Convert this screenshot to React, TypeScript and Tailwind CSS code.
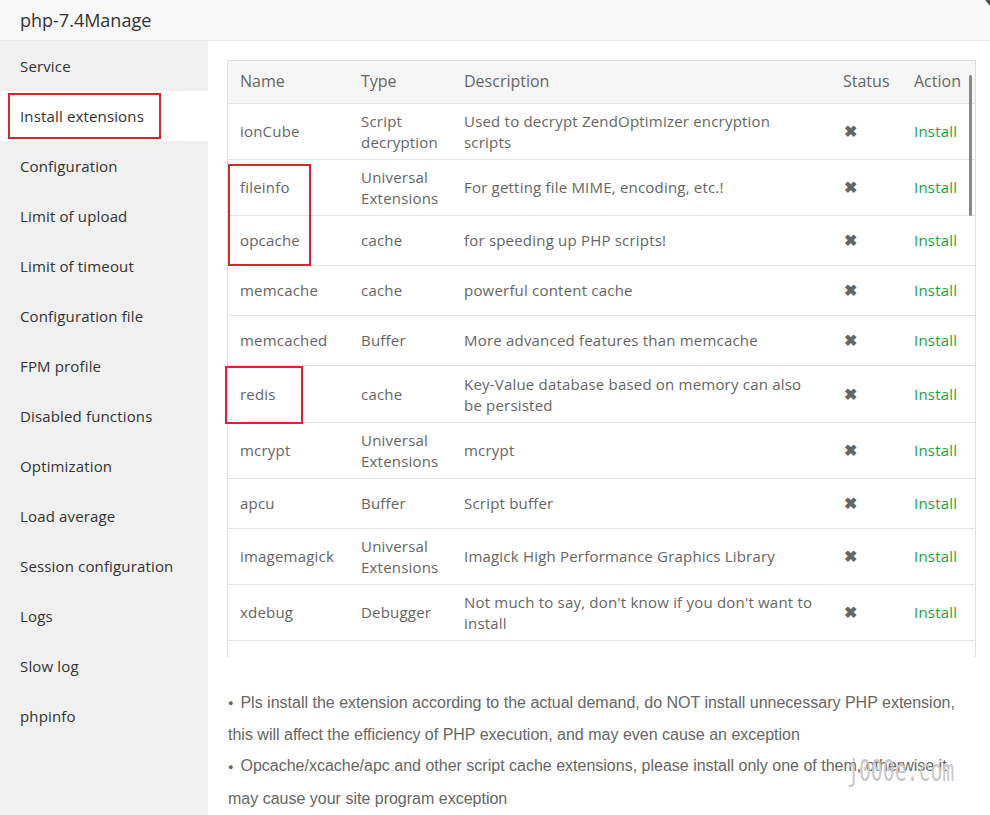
import React from "react";

type Row = { name: string; type: React.ReactNode; desc: React.ReactNode; tall?: boolean };

const rows: Row[] = [
  { name: "ionCube", type: <>Script<br />decryption</>, desc: <>Used to decrypt ZendOptimizer encryption<br />scripts</> },
  { name: "fileinfo", type: <>Universal<br />Extensions</>, desc: "For getting file MIME, encoding, etc.!" },
  { name: "opcache", type: "cache", desc: "for speeding up PHP scripts!" },
  { name: "memcache", type: "cache", desc: "powerful content cache" },
  { name: "memcached", type: "Buffer", desc: "More advanced features than memcache" },
  { name: "redis", type: "cache", desc: <>Key-Value database based on memory can also<br />be persisted</>, tall: true },
  { name: "mcrypt", type: <>Universal<br />Extensions</>, desc: "mcrypt" },
  { name: "apcu", type: "Buffer", desc: "Script buffer" },
  { name: "imagemagick", type: <>Universal<br />Extensions</>, desc: "Imagick High Performance Graphics Library" },
  { name: "xdebug", type: "Debugger", desc: <>Not much to say, don't know if you don't want to<br />install</> },
  { name: "imap", type: "Mail", desc: "Mail service extension" },
  { name: "exif", type: "Universal", desc: "Used to read picture EXIF information" },
];

const menu = [
  "Service",
  "Install extensions",
  "Configuration",
  "Limit of upload",
  "Limit of timeout",
  "Configuration file",
  "FPM profile",
  "Disabled functions",
  "Optimization",
  "Load average",
  "Session configuration",
  "Logs",
  "Slow log",
  "phpinfo",
];

export default function App() {
  return (
    <div
      className="relative w-[990px] h-[815px] overflow-hidden bg-white text-[#666]"
      style={{ fontFamily: '"Open Sans", "Noto Sans", sans-serif' }}
    >
      <div className="h-[41px] bg-[#f8f8f8] border-b border-[#e6e6e6] flex items-center pl-5 text-[18px] text-[#333]">
        php-7.4Manage
      </div>
      <div className="flex h-[774px]">
        <div className="w-[208px] bg-[#f0f0f0] shrink-0">
          {menu.map((m, i) => (
            <div
              key={m}
              className={
                "h-[50px] flex items-center pl-5 text-[15px] tracking-[0.15px] text-[#333] " +
                (i === 1 ? "bg-white" : "")
              }
            >
              {m}
            </div>
          ))}
        </div>
        <div className="flex-1 pl-[19px] pr-[14px] pt-[19px]">
          <div className="relative h-[597px] overflow-hidden border-l border-r border-t border-[#dddddd]">
            <table className="w-full border-collapse text-[15px] leading-[21px] tracking-[0.2px]">
              <colgroup>
                <col className="w-[121px]" />
                <col className="w-[103px]" />
                <col className="w-[379px]" />
                <col className="w-[71px]" />
                <col />
              </colgroup>
              <thead>
                <tr className="h-[42px] bg-[#f6f6f6] border-b border-[#e2e2e2]">
                  <th className="text-left font-normal pl-[12px] text-[16px] tracking-normal">Name</th>
                  <th className="text-left font-normal pl-[12px] text-[16px] tracking-normal">Type</th>
                  <th className="text-left font-normal pl-[12px] text-[16px] tracking-normal">Description</th>
                  <th className="text-left font-normal pl-[12px] text-[16px] tracking-normal">Status</th>
                  <th className="text-left font-normal pl-[12px] text-[16px] tracking-normal">Action</th>
                </tr>
              </thead>
              <tbody>
                {rows.map((r) => {
                  const pad = r.tall ? "pt-[8px] pb-[6px]" : "pt-[7px] pb-[6px]";
                  return (
                    <tr key={r.name} className="h-[50px] border-b border-[#e2e2e2]">
                      <td className={"pl-[12px] whitespace-nowrap " + pad}>{r.name}</td>
                      <td className={"pl-[12px] whitespace-nowrap " + pad}>{r.type}</td>
                      <td className={"pl-[12px] whitespace-nowrap " + pad}>{r.desc}</td>
                      <td className={"pl-[13px] " + pad}>
                        <span className="text-[16px] text-[#666] font-bold">✖</span>
                      </td>
                      <td className={"pl-[12px] text-[#20a53a] " + pad}>Install</td>
                    </tr>
                  );
                })}
              </tbody>
            </table>
            <div className="absolute right-[3px] top-[14px] w-[3px] h-[141px] bg-[#888] rounded-sm" />
          </div>
          <div
            className="mt-[30px] pl-[1px] text-[16px] leading-[31px] text-[#666] whitespace-nowrap"
            style={{ fontFamily: '"Liberation Sans", Arial, sans-serif' }}
          >
            <p>
              <span className="text-[9px] align-middle mr-[7px]">●</span>Pls install the extension according to the actual demand, do NOT install unnecessary PHP extension,
              <br />
              this will affect the efficiency of PHP execution, and may even cause an exception
            </p>
            <p>
              <span className="text-[9px] align-middle mr-[7px]">●</span>Opcache/xcache/apc and other script cache extensions, please install only one of them, otherwise it
              <br />
              may cause your site program exception
            </p>
          </div>
        </div>
      </div>

      {/* annotations */}
      <div className="absolute left-[8px] top-[93px] w-[153px] h-[46px] border-2 border-[#d7262e]" />
      <div className="absolute left-[228px] top-[164px] w-[83px] h-[102px] border-2 border-[#d7262e]" />
      <div className="absolute left-[225px] top-[366px] w-[78px] h-[58px] border-2 border-[#d7262e]" />

      <div
        className="absolute left-[847px] top-[751px] text-[30px] leading-[40px] text-[#c8c8c8] origin-left scale-x-[0.66]"
        style={{ fontFamily: '"DejaVu Sans Mono", monospace' }}
      >
        j000e.com
      </div>
      <div className="absolute right-[-3px] top-[-4px] w-[4px] h-[16px] rotate-[-40deg] bg-[#555]" />
    </div>
  );
}
